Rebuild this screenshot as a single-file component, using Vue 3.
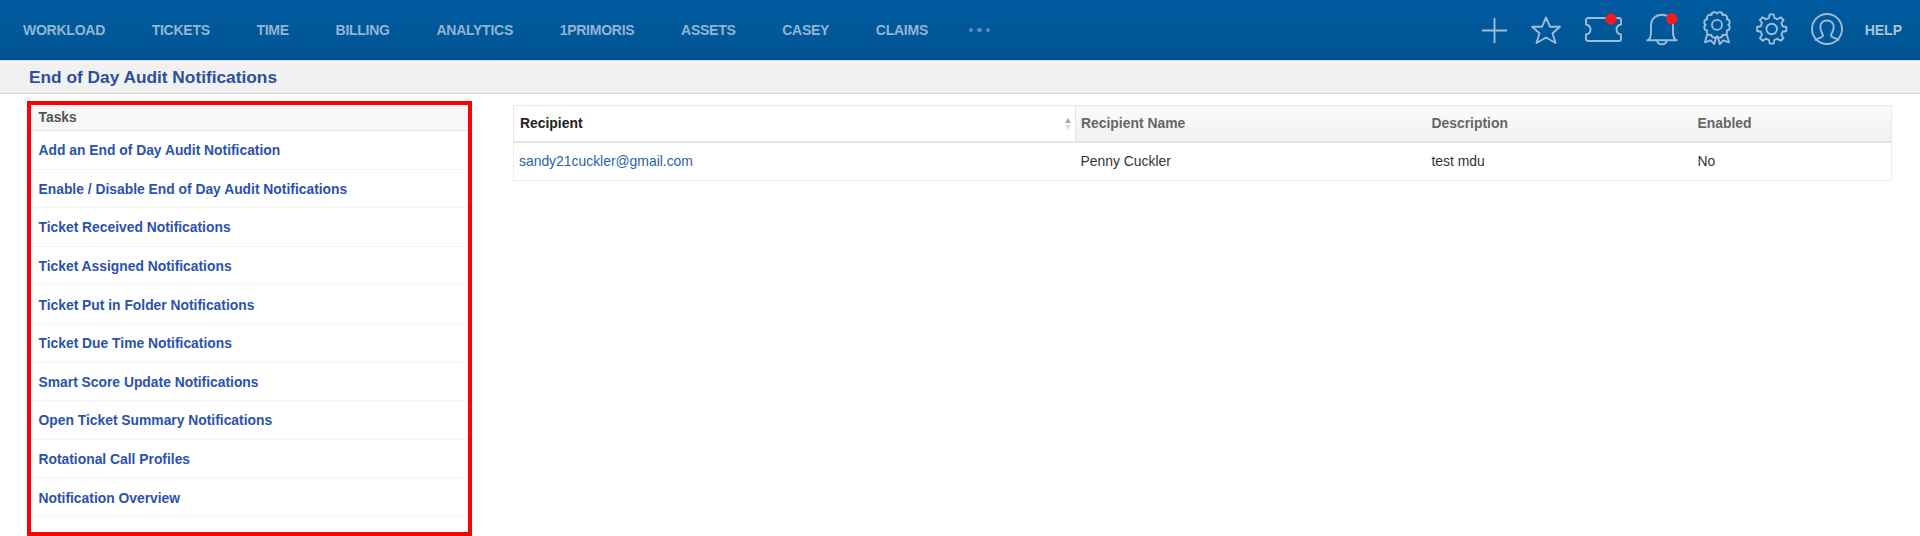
<script setup>
const nav = ['WORKLOAD', 'TICKETS', 'TIME', 'BILLING', 'ANALYTICS', '1PRIMORIS', 'ASSETS', 'CASEY', 'CLAIMS']
const tasks = [
  'Add an End of Day Audit Notification',
  'Enable / Disable End of Day Audit Notifications',
  'Ticket Received Notifications',
  'Ticket Assigned Notifications',
  'Ticket Put in Folder Notifications',
  'Ticket Due Time Notifications',
  'Smart Score Update Notifications',
  'Open Ticket Summary Notifications',
  'Rotational Call Profiles',
  'Notification Overview',
]

const point = (cx, cy, r, a) => `${(cx + r * Math.cos(a)).toFixed(2)} ${(cy + r * Math.sin(a)).toFixed(2)}`

function gearPath(cx, cy, outer, root, teeth) {
  const step = (Math.PI * 2) / teeth
  let d = ''
  for (let i = 0; i < teeth; i++) {
    const a = i * step - Math.PI / 2
    d += `${i ? 'L' : 'M'}${point(cx, cy, root, a - step * 0.32)}`
    d += `L${point(cx, cy, outer, a - step * 0.17)}`
    d += `L${point(cx, cy, outer, a + step * 0.17)}`
    d += `L${point(cx, cy, root, a + step * 0.32)}`
    d += `A${root} ${root} 0 0 1 ${point(cx, cy, root, a + step * 0.68)}`
  }
  return d + 'Z'
}

function scallopPath(cx, cy, r, lobes) {
  const step = (Math.PI * 2) / lobes
  const lobe = r * Math.sin(step / 2) * 1.05
  let d = `M${point(cx, cy, r, 0)}`
  for (let i = 1; i <= lobes; i++) {
    d += `A${lobe.toFixed(2)} ${lobe.toFixed(2)} 0 0 1 ${point(cx, cy, r, i * step)}`
  }
  return d + 'Z'
}

const gear = gearPath(16.7, 15, 14.8, 11.2, 8)
const badge = scallopPath(14, 10.9, 11.3, 12)
</script>

<template>
  <div class="page">
    <header class="topbar">
      <nav class="nav">
        <a v-for="item in nav" :key="item" class="nav-link">{{ item }}</a>
        <span class="dots"><i></i><i></i><i></i></span>
      </nav>
      <div class="tools">
        <svg class="icon" width="25" height="25" viewBox="0 0 25 25">
          <path d="M12.500 0v25M0 12.500h25" />
        </svg>
        <svg class="icon" width="30" height="28" viewBox="0 0 30 28">
          <path d="M15 1.500L19 10.800H29L21.500 17.300L24.500 27L15 21.500L5.500 27L8.500 17.300L1 10.800H11Z" />
        </svg>
        <svg class="icon" width="37" height="26" viewBox="0 0 37 26">
          <path d="M3 1H34a2 2 0 0 1 2 2V7.500C33.500 8 31.500 10 31.500 12.500S33.500 17 36 17.500V22a2 2 0 0 1-2 2H3a2 2 0 0 1-2-2V17.500C3.500 17 5.500 15 5.500 12.500S3.500 8 1 7.500V3A2 2 0 0 1 3 1Z" />
          <circle class="dot" cx="26" cy="2" r="5.700" />
        </svg>
        <svg class="icon" width="33" height="32" viewBox="0 0 33 32">
          <path d="M.5 26.300H31.500M2.500 26.300C4.500 24 5 21 5 18V11C5 5 10 .8 16 .8S27 5 27 11V18C27 21 27.500 24 29.500 26.300M11 26.300C11.500 29 14 30.200 16 30.200S20.500 29 21 26.300" />
          <circle class="dot" cx="25.700" cy="4.700" r="5.700" />
        </svg>
        <svg class="icon" width="28" height="32" viewBox="0 0 28 32">
          <path :d="badge" />
          <circle cx="14" cy="10.900" r="5" />
          <path d="M4.500 19.500L2 28.300L7.700 26.300L11.300 30L13 23.500M23.500 19.500L26 28.300L20.300 26.300L16.700 30L15 23.500" />
        </svg>
        <svg class="icon" width="32" height="32" viewBox="0 0 32 32">
          <path :d="gear" />
          <circle cx="16.700" cy="15" r="5.300" />
        </svg>
        <svg class="icon" width="32" height="32" viewBox="0 0 32 32">
          <circle cx="16" cy="15" r="15" />
          <path d="M4 26.500C6 24 11.500 24 12 21.500C12.200 20 9.300 17.500 9.300 13C9.300 9 12 6.500 16 6.500S22.700 9 22.700 13C22.700 17.500 19.800 20 20 21.500C20.500 24 26 24 28 26.500" />
        </svg>
        <span class="help">HELP</span>
      </div>
    </header>

    <div class="titlebar">
      <h1 class="title">End of Day Audit Notifications</h1>
    </div>

    <main class="content">
      <aside class="tasks">
        <div class="tasks-head">Tasks</div>
        <a v-for="task in tasks" :key="task" class="task">{{ task }}</a>
      </aside>

      <section class="table-wrap">
        <table class="grid">
          <colgroup>
            <col class="c1" />
            <col class="c2" />
            <col class="c3" />
            <col class="c4" />
          </colgroup>
          <thead>
            <tr>
              <th class="sorted">
                Recipient
                <span class="sort"><i class="up"></i><i class="down"></i></span>
              </th>
              <th>Recipient Name</th>
              <th>Description</th>
              <th>Enabled</th>
            </tr>
          </thead>
          <tbody>
            <tr>
              <td><a class="mail">sandy21cuckler@gmail.com</a></td>
              <td>Penny Cuckler</td>
              <td>test mdu</td>
              <td>No</td>
            </tr>
          </tbody>
        </table>
      </section>
    </main>
  </div>
</template>

<style>
html, body { margin: 0; background: #fff; }
</style>

<style scoped>
.page {
  width: 1920px;
  height: 536px;
  overflow: hidden;
  font-family: "Liberation Sans", Arial, sans-serif;
  background: #fff;
}
.topbar {
  height: 60px;
  display: flex;
  align-items: center;
  justify-content: space-between;
  padding: 0 18px 0 23px;
  background: linear-gradient(#005a9f, #005797 70%, #004f8c);
  border-bottom: 1px solid #d5dfe8;
}
.nav { display: flex; align-items: center; gap: 46.650px; }
.nav-link {
  color: #93b4d3;
  font-size: 14px;
  font-weight: 700;
  letter-spacing: -0.25px;
}
.dots { display: flex; gap: 4px; margin-left: -6px; }
.dots i { width: 4.500px; height: 4.500px; border-radius: 50%; background: #5c8db9; }
.tools { display: flex; align-items: center; gap: 24px; }
.icon {
  display: block;
  overflow: visible;
  fill: none;
  stroke: #9dbcd8;
  stroke-width: 1.900;
  stroke-linejoin: round;
}
.dot { fill: #ee1c25; stroke: none; }
.help { color: #a6c2dc; font-size: 14px; font-weight: 700; margin-left: -2px; }
.titlebar {
  height: 32px;
  padding-left: 29px;
  display: flex;
  align-items: center;
  background: #f1f1f1;
  border-bottom: 1px solid #d9d9d9;
}
.title { margin: 0; font-size: 17.300px; font-weight: 700; color: #2c4f9e; }
.content {
  display: flex;
  align-items: flex-start;
  padding: 7px 28px 0 27px;
  gap: 41px;
}
.tasks {
  box-sizing: border-box;
  flex: 0 0 445px;
  height: 435px;
  border: 4px solid #ff0000;
  display: flex;
  flex-direction: column;
}
.tasks-head {
  box-sizing: border-box;
  height: 26px;
  padding: 0 0 1px 7.500px;
  display: flex;
  align-items: center;
  background: #f7f7f7;
  border-bottom: 1px solid #e6e6e6;
  font-size: 13.850px;
  font-weight: 700;
  color: #555;
}
.task {
  box-sizing: border-box;
  height: 38.600px;
  padding: 1px 0 0 7.500px;
  display: flex;
  align-items: center;
  border-bottom: 1px solid #f4f4f4;
  font-size: 13.850px;
  font-weight: 700;
  color: #2b52ae;
}
.table-wrap { flex: 1; padding-top: 4px; }
.grid {
  width: 1379px;
  table-layout: fixed;
  border-collapse: collapse;
  font-size: 13.900px;
}
.c1 { width: 562px; }
.c2 { width: 351px; }
.c3 { width: 266px; }
.grid th {
  position: relative;
  box-sizing: border-box;
  height: 36px;
  padding: 0 5px 1px;
  text-align: left;
  font-weight: 700;
  color: #666;
  background: linear-gradient(#fbfbfb, #f0f0f0);
  border-top: 1px solid #e8e8e8;
  border-bottom: 2px solid #e4e4e4;
}
.grid th:last-child { border-right: 1px solid #e8e8e8; }
.grid th.sorted {
  padding-left: 6px;
  color: #222;
  background: #fff;
  border-left: 1px solid #e8e8e8;
  border-right: 1px solid #e4e4e4;
}
.sort {
  position: absolute;
  right: 4px;
  top: 12px;
  display: flex;
  flex-direction: column;
  gap: 2px;
}
.sort i { width: 0; height: 0; border-left: 3px solid transparent; border-right: 3px solid transparent; }
.sort .up { border-bottom: 5px solid #aaa; }
.sort .down { border-top: 5px solid #ddd; }
.grid td {
  box-sizing: border-box;
  height: 39px;
  padding: 0 5px 1px;
  color: #333;
  border-bottom: 1px solid #eee;
}
.grid td:first-child { border-left: 1px solid #eee; padding-left: 5px; }
.grid td:last-child { border-right: 1px solid #eee; }
.mail { color: #2b5fb0; }
</style>
